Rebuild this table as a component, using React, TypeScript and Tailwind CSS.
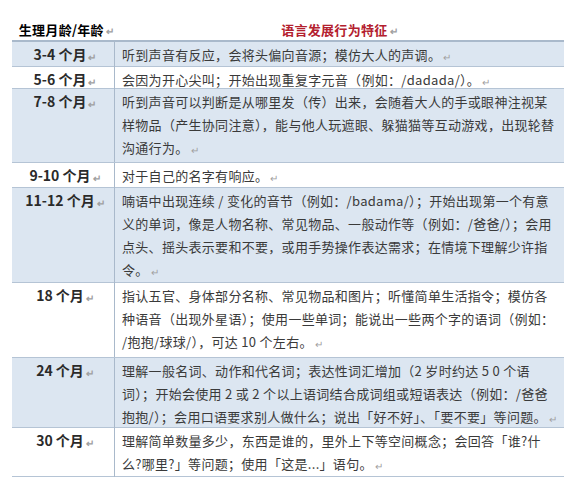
import React from "react";

const Mark = () => (
  <span className="ml-[2px] text-[10px] text-[#a0a0a0] align-middle">↵</span>
);

type Row = { age: string; lines: string[]; blue: boolean; h: string };

const rows: Row[] = [
  {
    age: "3-4 个月",
    blue: true,
    h: "h-[25px]",
    lines: ["听到声音有反应，会将头偏向音源；模仿大人的声调。"],
  },
  {
    age: "5-6 个月",
    blue: false,
    h: "h-[22px]",
    lines: ["会因为开心尖叫；开始出现重复字元音（例如：/dadada/）。"],
  },
  {
    age: "7-8 个月",
    blue: true,
    h: "h-[74px]",
    lines: [
      "听到声音可以判断是从哪里发（传）出来，会随着大人的手或眼神注视某",
      "样物品（产生协同注意），能与他人玩遮眼、躲猫猫等互动游戏，出现轮替",
      "沟通行为。",
    ],
  },
  {
    age: "9-10 个月",
    blue: false,
    h: "h-[25px]",
    lines: ["对于自己的名字有响应。"],
  },
  {
    age: "11-12 个月",
    blue: true,
    h: "h-[95px]",
    lines: [
      "喃语中出现连续 / 变化的音节（例如：/badama/）；开始出现第一个有意",
      "义的单词，像是人物名称、常见物品、一般动作等（例如：/爸爸/）；会用",
      "点头、摇头表示要和不要，或用手势操作表达需求；在情境下理解少许指",
      "令。",
    ],
  },
  {
    age: "18 个月",
    blue: false,
    h: "h-[75px]",
    lines: [
      "指认五官、身体部分名称、常见物品和图片；听懂简单生活指令；模仿各",
      "种语音（出现外星语）；使用一些单词；能说出一些两个字的语词（例如：",
      "/抱抱/球球/），可达 10 个左右。",
    ],
  },
  {
    age: "24 个月",
    blue: true,
    h: "h-[70px]",
    lines: [
      "理解一般名词、动作和代名词；表达性词汇增加（2 岁时约达 5 0 个语",
      "词）；开始会使用 2 或 2 个以上语词结合成词组或短语表达（例如：/爸爸",
      "抱抱/）；会用口语要求别人做什么；说出「好不好」、「要不要」等问题。",
    ],
  },
  {
    age: "30 个月",
    blue: false,
    h: "h-[49px]",
    lines: [
      "理解简单数量多少，东西是谁的，里外上下等空间概念；会回答「谁?什",
      "么?哪里?」等问题；使用「这是...」语句。",
    ],
  },
];

export default function App() {
  return (
    <div
      className="w-[574px] h-[483px] bg-white overflow-hidden text-[#3a3a3a]"
      style={{ fontFamily: '"Noto Sans CJK SC", "Noto Sans", sans-serif' }}
    >
      <div className="ml-[12px] mt-[20px] w-[552px]">
        <div className="grid grid-cols-[103px_449px] h-[22px] border-b-2 border-[#a9b9cb] text-[13px] font-bold leading-[20px]">
          <div className="text-center text-black pl-[6px] tracking-[0.3px]">
            生理月龄/年龄
            <Mark />
          </div>
          <div className="text-center text-[#b3202e] tracking-[0.3px]">
            语言发展行为特征
            <Mark />
          </div>
        </div>
        {rows.map((r) => (
          <div
            key={r.age}
            className={`grid grid-cols-[103px_449px] border-b border-[#b5c4d5] text-[13px] leading-[23px] ${r.h} ${
              r.blue ? "bg-[#dce6f1]" : "bg-white"
            }`}
          >
            <div className="border-r border-[#a9b9cb] text-center text-[14px] font-semibold text-[#2a2a2a] pt-[1px] pl-[4px] whitespace-nowrap">
              {r.age}
              <Mark />
            </div>
            <div className="pl-[7px] pt-[1px] tracking-[0.3px]">
              {r.lines.map((l, i) => (
                <div key={i} className="whitespace-nowrap">
                  {l}
                  {i === r.lines.length - 1 && <Mark />}
                </div>
              ))}
            </div>
          </div>
        ))}
      </div>
    </div>
  );
}
